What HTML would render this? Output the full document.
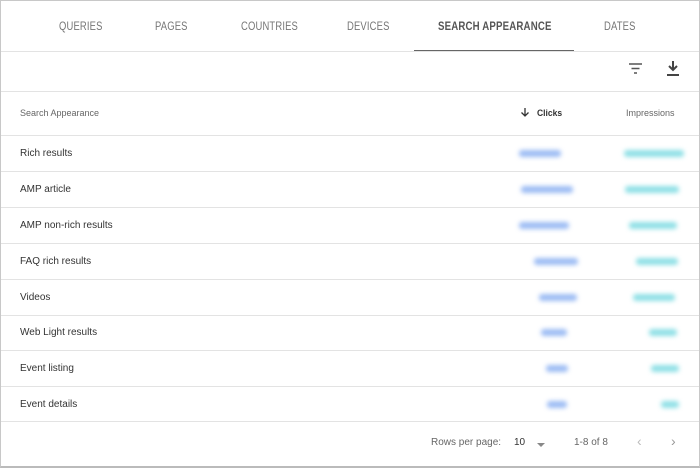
<!DOCTYPE html><html><head><style>
body{margin:0;width:700px;height:467px;background:#fff;font-family:"Liberation Sans",sans-serif;overflow:hidden}
.f{position:absolute;left:0;top:0;width:698px;height:465px;border:1px solid #c8c8c8;border-bottom:2px solid #bbb}
.t{position:absolute;top:20px;font-size:11.5px;color:#757575;letter-spacing:.2px;transform:scaleX(.82);transform-origin:left;white-space:nowrap}
.h{position:absolute;left:0;width:698px;height:1px;background:#e3e3e3}
.r{position:absolute;left:19px;font-size:10px;color:#333;white-space:nowrap}
.b{position:absolute;height:7px;border-radius:3px;filter:blur(2.5px)}
.c{background:#9cbcf4}.i{background:#8fe0e6}
</style></head><body><div class="f">
<div class="t" style="left:58px">QUERIES</div>
<div class="t" style="left:154px">PAGES</div>
<div class="t" style="left:240px">COUNTRIES</div>
<div class="t" style="left:346px">DEVICES</div>
<div class="t" style="left:437px;color:#555;font-weight:bold;transform:scaleX(.84)">SEARCH APPEARANCE</div>
<div class="t" style="left:603px">DATES</div>
<div style="position:absolute;left:413px;top:49px;width:160px;height:2px;background:#666"></div>
<div class="h" style="top:50px"></div>
<svg style="position:absolute;left:627px;top:61px" width="16" height="14"><path d="M1 2h13M3.5 6.5h8M6 11h3" stroke="#555" stroke-width="1.6"/></svg>
<svg style="position:absolute;left:664px;top:59px" width="16" height="17"><path d="M8 1v9M4 6l4 4 4-4M2 15h12" stroke="#444" stroke-width="2" fill="none"/></svg>
<div class="h" style="top:90px"></div>
<div class="r" style="top:107px;font-size:9px;color:#666">Search Appearance</div>
<svg style="position:absolute;left:519px;top:106px" width="10" height="11"><path d="M5 1v8M1.5 5.5L5 9l3.5-3.5" stroke="#333" stroke-width="1.3" fill="none"/></svg>
<div class="r" style="top:107px;left:536px;font-size:9.5px;font-weight:bold;color:#333;transform:scaleX(.9);transform-origin:left">Clicks</div>
<div class="r" style="top:107px;left:625px;font-size:9px;color:#666">Impressions</div>
<div class="h" style="top:134px"></div>
<div class="r" style="top:147px">Rich results</div><div class="b c" style="top:149px;left:518px;width:42px"></div><div class="b i" style="top:149px;left:623px;width:60px"></div>
<div class="h" style="top:170px"></div>
<div class="r" style="top:183px">AMP article</div><div class="b c" style="top:185px;left:520px;width:52px"></div><div class="b i" style="top:185px;left:624px;width:54px"></div>
<div class="h" style="top:206px"></div>
<div class="r" style="top:219px">AMP non-rich results</div><div class="b c" style="top:221px;left:518px;width:50px"></div><div class="b i" style="top:221px;left:628px;width:48px"></div>
<div class="h" style="top:242px"></div>
<div class="r" style="top:255px">FAQ rich results</div><div class="b c" style="top:257px;left:533px;width:44px"></div><div class="b i" style="top:257px;left:635px;width:42px"></div>
<div class="h" style="top:278px"></div>
<div class="r" style="top:291px">Videos</div><div class="b c" style="top:293px;left:538px;width:38px"></div><div class="b i" style="top:293px;left:632px;width:42px"></div>
<div class="h" style="top:314px"></div>
<div class="r" style="top:326px">Web Light results</div><div class="b c" style="top:328px;left:540px;width:26px"></div><div class="b i" style="top:328px;left:648px;width:28px"></div>
<div class="h" style="top:349px"></div>
<div class="r" style="top:362px">Event listing</div><div class="b c" style="top:364px;left:545px;width:22px"></div><div class="b i" style="top:364px;left:650px;width:28px"></div>
<div class="h" style="top:385px"></div>
<div class="r" style="top:398px">Event details</div><div class="b c" style="top:400px;left:546px;width:20px"></div><div class="b i" style="top:400px;left:660px;width:18px"></div>
<div class="h" style="top:420px"></div>
<div class="r" style="top:436px;left:430px;color:#666">Rows per page:</div>
<div class="r" style="top:436px;left:513px;color:#333">10</div>
<div style="position:absolute;left:536px;top:442px;border:4px solid transparent;border-top:4px solid #888"></div>
<div class="r" style="top:436px;left:573px;color:#666">1-8 of 8</div>
<div class="r" style="top:432px;left:636px;color:#bbb;font-size:14px">‹</div>
<div class="r" style="top:432px;left:670px;color:#999;font-size:14px">›</div>
</div></body></html>
